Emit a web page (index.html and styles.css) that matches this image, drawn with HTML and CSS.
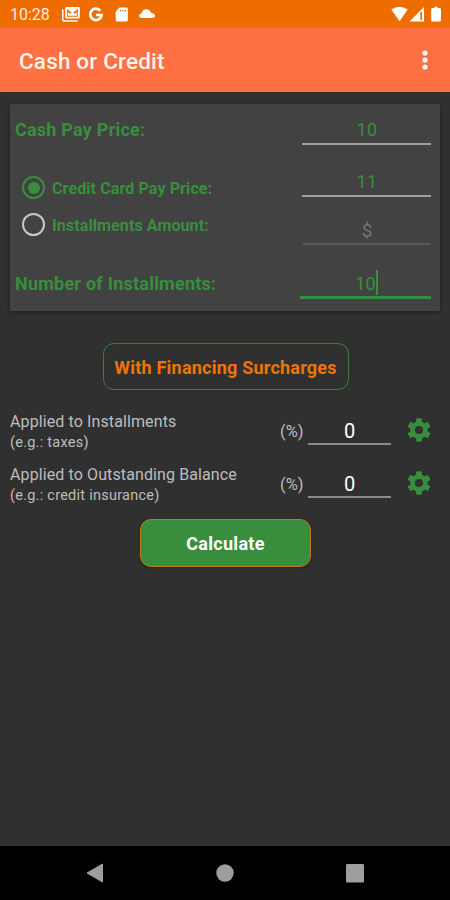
FILE: index.html
```html
<!DOCTYPE html>
<html lang="en">
<head>
<meta charset="utf-8">
<title>Cash or Credit</title>
<link rel="stylesheet" href="styles.css">
</head>
<body>
<div class="screen">
  <div class="status">
    <span class="clock">10:28</span>
    <svg class="status-left" width="96" height="28" viewBox="0 0 96 28" fill="#fff">
      <path fill-rule="evenodd" d="M4.500 7h12q1.300 0 1.300 1.300v9q0 1.300-1.300 1.300h-12q-1.300 0-1.300-1.300v-9Q3.200 7 4.500 7zM5 9v7.700h11V9l-5.500 4.300z"/>
      <path d="M5.800 15.800v-3.800l2.300 1.800 2.400-1.500 2.400 1.500 2.300-1.800v3.800z"/>
      <path d="M.8 9.500v10.300q0 1.200 1.200 1.200h13.500" fill="none" stroke="#fff" stroke-width="1.500"/>
      <path d="M38.300 10.700a5.700 5.700 0 1 0 1.300 4.300h-5.500" fill="none" stroke="#fff" stroke-width="2.700"/>
      <path fill-rule="evenodd" d="M57.500 7.500h7q1.300 0 1.300 1.300v11.400q0 1.300-1.300 1.300H55q-1.300 0-1.300-1.300v-8.700zM58 9.800v1.800h1.300V9.800zm2.400 0v1.800h1.300V9.800zm2.400 0v1.800h1.300V9.800z"/>
      <path d="M80 18q-3-.2-3-2.400 0-1.500 2.300-2.100Q80.800 9.300 84.300 9.300q3.500 0 4.800 3.600 4 .5 4 2.700 0 2.400-3 2.400z"/>
    </svg>
    <svg class="status-right" width="54" height="28" viewBox="0 0 54 28" fill="#fff">
      <path d="M.3 9.500Q8.500 4 16.700 9.500L8.500 21.300z"/>
      <path d="M33 7v14.500H18.500z"/>
      <path d="M29.300 12h1.700v8h-1.700z" fill="#ef6c00"/>
      <path d="M43.500 6.800h3v1.300h2.200q1.300 0 1.300 1.300v11q0 1.100-1.300 1.100h-7.200q-1.300 0-1.300-1.100v-11q0-1.300 1.300-1.300h2z"/>
    </svg>
  </div>
  <header class="bar">
    <h1>Cash or Credit</h1>
    <svg width="8" height="22" viewBox="0 0 8 22" fill="#fff"><circle cx="4" cy="4" r="2.600"/><circle cx="4" cy="11" r="2.600"/><circle cx="4" cy="18" r="2.600"/></svg>
  </header>
  <main>
    <section class="card">
      <div class="labels">
        <div class="label cash">Cash Pay Price:</div>
        <div class="option"><span class="radio on"></span><span>Credit Card Pay Price:</span></div>
        <div class="option"><span class="radio"></span><span>Installments Amount:</span></div>
        <div class="label number">Number of Installments:</div>
      </div>
      <div class="fields">
        <div class="field f1">10</div>
        <div class="field f2">11</div>
        <div class="field f3">$</div>
        <div class="field f4"><span>10</span><i class="caret"></i></div>
      </div>
    </section>
    <div class="surcharge"><span>With Financing Surcharges</span></div>
    <div class="rate">
      <div class="desc"><div class="main">Applied to Installments</div><div class="sub">(e.g.: taxes)</div></div>
      <span class="pct">(%)</span><span class="value">0</span>
      <svg class="gear" width="28" height="28" viewBox="-14 -14 28 28" fill="#388e3c"><circle r="6.400" fill="none" stroke="#388e3c" stroke-width="4.600"/><g id="teeth"><rect x="-2.900" y="-11.700" width="5.800" height="23.400" rx="1" id="tooth" clip-path="url(#ring)"/><use href="#tooth" transform="rotate(60)"/><use href="#tooth" transform="rotate(120)"/></g><clipPath id="ring"><path d="M-4-12h8v5h-8zM-4 7h8v5h-8z"/></clipPath></svg>
    </div>
    <div class="rate">
      <div class="desc"><div class="main">Applied to Outstanding Balance</div><div class="sub">(e.g.: credit insurance)</div></div>
      <span class="pct">(%)</span><span class="value">0</span>
      <svg class="gear" width="28" height="28" viewBox="-14 -14 28 28" fill="#388e3c"><circle r="6.400" fill="none" stroke="#388e3c" stroke-width="4.600"/><use href="#teeth"/></svg>
    </div>
    <div class="calculate"><span>Calculate</span></div>
  </main>
  <nav class="nav">
    <svg width="18" height="20" viewBox="0 0 18 20"><path d="M16.500 1v18L1 10z" fill="#9e9e9e" stroke="#9e9e9e" stroke-linejoin="round"/></svg>
    <svg width="18" height="18" viewBox="0 0 18 18"><circle cx="9" cy="9" r="8.700" fill="#9e9e9e"/></svg>
    <svg width="18" height="19" viewBox="0 0 18 19"><rect width="18" height="18.500" rx="1.200" fill="#9e9e9e"/></svg>
  </nav>
</div>
</body>
</html>
```
FILE: styles.css
```css
* { box-sizing: border-box; }
body { margin: 0; font-family: Roboto, sans-serif; background: #303030; }
.screen { width: 450px; height: 900px; display: flex; flex-direction: column; overflow: hidden; white-space: nowrap; }
svg { display: block; flex: none; }

.status { height: 28px; background: #ef6c00; display: flex; align-items: center; padding-left: 10px; color: #ffe9d8; }
.clock { width: 52px; font-size: 16px; line-height: 28px; padding-top: 2px; }
.status-right { margin-left: 233px; }

.bar { height: 64px; background: #ff7043; display: flex; align-items: center; justify-content: space-between; padding: 0 21px 0 19px; }
.bar svg { margin-top: -1px; }
h1 { margin: 2px 0 0; font-size: 22.500px; font-weight: 500; line-height: 26px; letter-spacing: .17px; color: #fff3ee; }

main { flex: 1; padding: 12px 10px 0; display: flex; flex-direction: column; }
.card { height: 207px; background: #424242; border-radius: 1px; box-shadow: 0 1px 4px rgba(0, 0, 0, .4); display: flex; justify-content: space-between; padding: 0 9px 0 5px; color: #388e3c; }
.label { font-size: 18px; font-weight: 700; line-height: 52px; height: 52px; letter-spacing: .23px; }
.label.cash { margin-bottom: 14px; }
.label.number { margin-top: 14px; }
.option { height: 37px; display: flex; align-items: center; gap: 7px; padding-left: 7px; font-size: 16px; font-weight: 700; line-height: 37px; letter-spacing: .11px; }
.radio { width: 23px; height: 23px; margin-top: -2px; border: 2px solid #c8c8c8; border-radius: 50%; display: flex; align-items: center; justify-content: center; }
.radio.on { border-color: #388e3c; }
.radio.on::after { content: ""; width: 12px; height: 12px; border-radius: 50%; background: #388e3c; }

.fields { width: 131px; display: flex; flex-direction: column; align-items: flex-end; }
.field { width: 129px; border-bottom: 2px solid #a0a0a0; display: flex; justify-content: center; font-size: 18px; line-height: 24px; }
.f1 { margin-top: 12px; height: 29px; line-height: 27px; letter-spacing: .4px; padding-left: 1px; }
.f2 { margin-top: 24px; height: 28px; line-height: 26px; letter-spacing: .4px; padding-left: 1px; }
.f3 { margin-top: 19px; height: 29px; width: 128px; border-bottom: 2px solid #585858; line-height: 29px; color: #747474; font-size: 19px; }
.f4 { margin-top: 25px; height: 29px; width: 131px; border-bottom: 3px solid #388e3c; line-height: 27px; padding-left: 2px; letter-spacing: .2px; }
.caret { width: 2px; height: 25px; background: #388e3c; }

.surcharge { width: 246px; height: 47px; margin: 32px 0 0 92.500px; border: 1.500px solid #38803c; border-radius: 11px; display: flex; align-items: center; justify-content: center; color: #ef7406; font-size: 18px; font-weight: 700; letter-spacing: .22px; padding-top: 2px; }
.rate { height: 53px; display: flex; align-items: flex-start; color: #bdbdbd; }
.surcharge + .rate { margin-top: 21px; }
.desc { width: 270px; }
.main { font-size: 16px; line-height: 22px; letter-spacing: .11px; }
.sub { font-size: 14.500px; line-height: 20px; letter-spacing: .25px; }
.pct { width: 28px; font-size: 16.500px; line-height: 42px; }
.value { width: 83px; height: 34px; border-bottom: 2px solid #8a8a8a; color: #fff; text-align: center; font-size: 20px; line-height: 40px; }
.gear { margin: 5px 0 0 13.500px; }
.calculate { width: 171px; height: 48px; margin: 2px 0 0 130px; border: 1.500px solid #c67820; border-radius: 11px; background: #388e3c; box-shadow: 0 1px 2px rgba(0, 0, 0, .3); display: flex; align-items: center; justify-content: center; color: #fff; font-size: 18px; font-weight: 700; letter-spacing: .3px; }

.nav { height: 54px; background: #000; display: flex; align-items: center; justify-content: space-between; padding: 0 86px; }
```
